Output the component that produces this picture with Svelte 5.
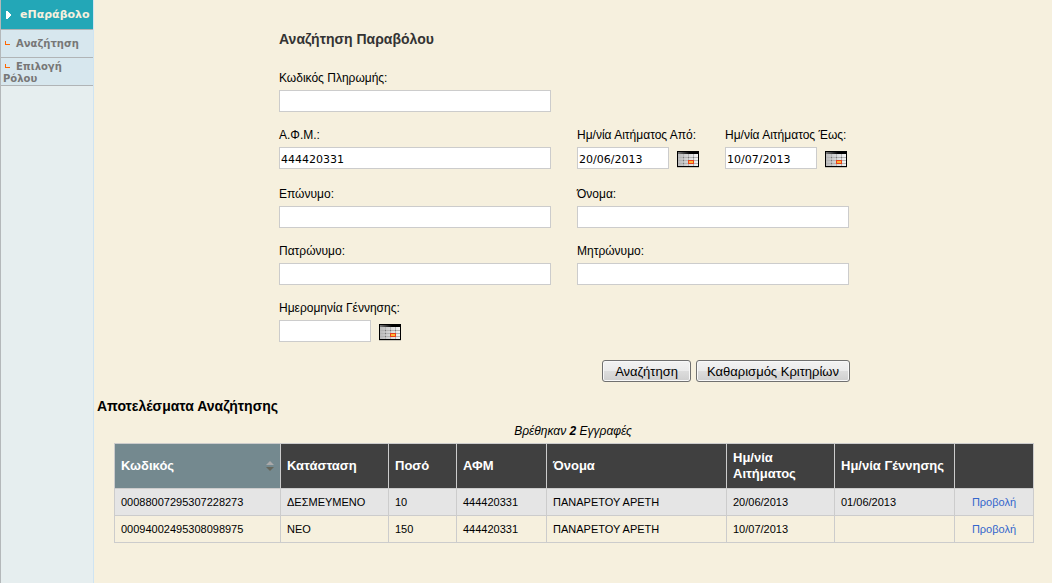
<script>
  const menu = ['Αναζήτηση', 'Επιλογή Ρόλου'];

  const columns = [
    { label: 'Κωδικός', cls: 'code', sorted: true },
    { label: 'Κατάσταση', cls: 'status' },
    { label: 'Ποσό', cls: 'amount' },
    { label: 'ΑΦΜ', cls: 'afm' },
    { label: 'Όνομα', cls: 'name' },
    { label: 'Ημ/νία Αιτήματος', cls: 'requested' },
    { label: 'Ημ/νία Γέννησης', cls: 'born' },
    { label: '', cls: 'action' },
  ];

  const rows = [
    ['00088007295307228273', 'ΔΕΣΜΕΥΜΕΝΟ', '10', '444420331', 'ΠΑΝΑΡΕΤΟΥ ΑΡΕΤΗ', '20/06/2013', '01/06/2013'],
    ['00094002495308098975', 'ΝΕΟ', '150', '444420331', 'ΠΑΝΑΡΕΤΟΥ ΑΡΕΤΗ', '10/07/2013', ''],
  ];

  let code = $state('');
  let afm = $state('444420331');
  let dateFrom = $state('20/06/2013');
  let dateTo = $state('10/07/2013');
  let lastName = $state('');
  let firstName = $state('');
  let father = $state('');
  let mother = $state('');
  let birthDate = $state('');

  function clearForm() {
    code = afm = dateFrom = dateTo = lastName = firstName = father = mother = birthDate = '';
  }
</script>

{#snippet calendar(label)}
  <button type="button" class="calendar" aria-label={label}>
    <svg width="22" height="18" viewBox="0 0 22 18" shape-rendering="crispEdges">
      <defs>
        <linearGradient id="cal-top"><stop offset="0" stop-color="#777" /><stop offset="0.6" stop-color="#000" /></linearGradient>
        <linearGradient id="cal-face"><stop offset="0" stop-color="#bbb" /><stop offset="1" stop-color="#f2f2f2" /></linearGradient>
      </defs>
      <rect y="16" width="22" height="1" fill="#c9c5b8" />
      <rect width="22" height="16" fill="#000" />
      <rect x="1" y="1" width="20" height="2" fill="url(#cal-top)" />
      <rect x="1" y="3" width="20" height="12" fill="url(#cal-face)" />
      <path d="M1 6h20v1h-20zM1 9h20v1h-20zM1 12h20v1h-20zM6 3h1v12h-1zM11 3h1v12h-1zM16 3h1v12h-1z" fill="#b4b4b4" />
      <path d="M6 6h1v1h-1zM11 6h1v1h-1zM16 6h1v1h-1zM6 9h1v1h-1zM6 12h1v1h-1z" fill="#777" />
      <rect x="11" y="9" width="6" height="4" fill="#e8401c" />
      <rect x="12" y="10" width="4" height="2" fill="#ffb833" />
    </svg>
  </button>
{/snippet}

<div class="page">
  <nav>
    <a class="top" href="#home">
      <svg width="6" height="8" viewBox="0 0 6 8" shape-rendering="crispEdges"><path d="M0 0h2v1h1v1h1v1h1v2h-1v1h-1v1h-1v1h-2z" fill="#fff" /></svg>
      eΠαράβολο
    </a>
    {#each menu as item}
      <a class="item" href="#menu"><svg width="5" height="4" viewBox="0 0 5 4" shape-rendering="crispEdges"><path d="M0 0h1v3h4v1h-5z" fill="#f60" /></svg>{item}</a>
    {/each}
  </nav>

  <main>
    <form>
      <h1>Αναζήτηση Παραβόλου</h1>
      <div class="fields">
        <div class="field">
          <label for="code">Κωδικός Πληρωμής:</label>
          <input id="code" type="text" bind:value={code} />
        </div>
        <div class="field first">
          <label for="afm">Α.Φ.Μ.:</label>
          <input id="afm" type="text" bind:value={afm} />
        </div>
        <div class="dates">
          <div class="field">
            <label for="from">Ημ/νία Αιτήματος Από:</label>
            <div class="date"><input id="from" type="text" bind:value={dateFrom} />{@render calendar('Από')}</div>
          </div>
          <div class="field">
            <label for="to">Ημ/νία Αιτήματος Έως:</label>
            <div class="date"><input id="to" type="text" bind:value={dateTo} />{@render calendar('Έως')}</div>
          </div>
        </div>
        <div class="field">
          <label for="last">Επώνυμο:</label>
          <input id="last" type="text" bind:value={lastName} />
        </div>
        <div class="field">
          <label for="first">Όνομα:</label>
          <input id="first" type="text" bind:value={firstName} />
        </div>
        <div class="field">
          <label for="father">Πατρώνυμο:</label>
          <input id="father" type="text" bind:value={father} />
        </div>
        <div class="field">
          <label for="mother">Μητρώνυμο:</label>
          <input id="mother" type="text" bind:value={mother} />
        </div>
        <div class="field first">
          <label for="birth">Ημερομηνία Γέννησης:</label>
          <div class="date"><input id="birth" type="text" bind:value={birthDate} />{@render calendar('Γέννηση')}</div>
        </div>
      </div>
      <div class="actions">
        <button type="button">Αναζήτηση</button>
        <button type="button" onclick={clearForm}>Καθαρισμός Κριτηρίων</button>
      </div>
    </form>

    <h2>Αποτελέσματα Αναζήτησης</h2>
    <p class="found">Βρέθηκαν <b>{rows.length}</b> Εγγραφές</p>
    <div class="results">
      <table>
        <thead>
          <tr>
            {#each columns as col}
              <th class={col.cls}>
                {#if col.sorted}
                  <div class="sort">
                    {col.label}
                    <svg width="8" height="10" viewBox="0 0 8 10"><path d="M0 4l4-4 4 4z" fill="#aaa" /><path d="M0 6h8l-4 4z" fill="#66665a" /></svg>
                  </div>
                {:else}
                  {col.label}
                {/if}
              </th>
            {/each}
          </tr>
        </thead>
        <tbody>
          {#each rows as row}
            <tr>
              {#each row as cell}
                <td>{cell}</td>
              {/each}
              <td class="action"><a href="#view">Προβολή</a></td>
            </tr>
          {/each}
        </tbody>
      </table>
    </div>
  </main>
</div>

<style>
  :global(body) { background: #f6f0de; }
  .page {
    display: flex; min-height: 100vh;
    font-family: "Liberation Sans", Arial, sans-serif; font-size: 12px; color: #000;
  }

  nav {
    flex: none; width: 92px;
    background: #e6eeef; border-left: 1px solid #b4b8ba; border-right: 1px solid #cfe4f2;
    font-family: "DejaVu Sans", Verdana, sans-serif; font-weight: bold;
  }
  nav a { display: block; text-decoration: none; border-bottom: 1px solid #b0b4b6; }
  .top {
    display: flex; align-items: center; gap: 8px; height: 29px; padding-left: 5px;
    background: #23a7b7; color: #f6f0de; font-size: 11px; white-space: nowrap; overflow: hidden;
  }
  nav .top { display: flex; }
  .top svg { flex: none; }
  .item {
    padding: 3px 2px 0; min-height: 24px;
    background: #d7e7ee; color: #777; font-size: 10px; line-height: 12px;
  }
  .item:nth-child(2) { padding-top: 8px; min-height: 19px; }
  .item svg { float: left; margin: 3px 6px 0 2px; }

  main { flex: 1; min-width: 0; }
  form { max-width: 571px; padding: 30px 16px 0 185px; }
  h1 { margin: 0 0 22px; font-size: 14px; line-height: 18px; color: #333; }
  .fields { display: grid; grid-template-columns: minmax(0, 272px) minmax(0, 272px); gap: 15px 26px; }
  .first { grid-column: 1; }
  .field:first-child:not(.dates .field) { grid-column: 1 / -1; width: 272px; }
  label { display: block; margin-bottom: 4px; line-height: 16px; white-space: nowrap; }
  input {
    box-sizing: border-box; display: block; width: 100%; height: 22px; padding: 2px 1px 0;
    background: #fff; border: 1px solid #ccc; color: #000;
    font-family: "DejaVu Sans", Verdana, sans-serif; font-size: 11px;
  }
  .dates { display: flex; gap: 26px; }
  .date { display: flex; align-items: flex-start; gap: 8px; height: 24px; }
  .date input { width: 92px; }
  .calendar { align-self: flex-end; padding: 0 0 2px; border: 0; background: none; }
  .calendar svg { display: block; }
  .actions { display: flex; justify-content: flex-end; gap: 5px; margin-top: 16px; }
  .actions button {
    height: 22px; min-width: 89px; padding: 0 10px; border: 1px solid #707070; border-radius: 3px;
    background: linear-gradient(#f2f2f2, #ebebeb 50%, #ddd 50%, #cfcfcf);
    box-shadow: inset 0 0 0 1px #f8f8f8;
    font-family: "Liberation Sans", Arial, sans-serif; font-size: 13px; color: #000; white-space: nowrap;
  }

  h2 { margin: 15px 0 0 3px; font-size: 14px; line-height: 18px; }
  .found { margin: 8px 0 4px; line-height: 16px; text-align: center; font-style: italic; }
  .results { padding: 0 18px 0 20px; }
  table { width: 100%; table-layout: fixed; border-collapse: collapse; font-size: 11px; }
  th, td { box-sizing: border-box; border: 1px solid #ccc; padding: 0 6px; text-align: left; }
  th { height: 45px; background: #404040; color: #fff; font-size: 13px; line-height: 16px; }
  td { height: 27px; }
  tbody tr:nth-child(odd) { background: #e5e5e5; }
  .code { width: 166px; background: #74898f; }
  .status { width: 108px; }
  .amount { width: 68px; }
  .afm { width: 90px; }
  .requested { width: 108px; }
  .born { width: 120px; }
  .action { width: 79px; text-align: center; }
  .sort { display: flex; align-items: center; justify-content: space-between; }
  td a { color: #36c; text-decoration: none; }
</style>
